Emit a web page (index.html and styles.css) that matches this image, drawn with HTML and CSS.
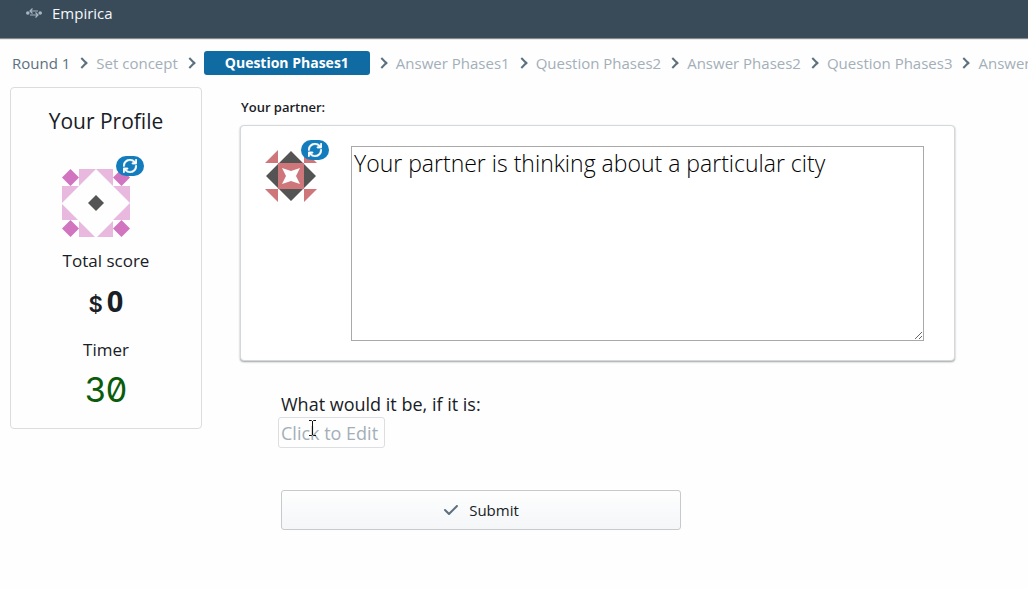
FILE: index.html
```html
<!DOCTYPE html>
<html lang="en">
<head>
<meta charset="utf-8">
<meta name="viewport" content="width=device-width, initial-scale=1">
<title>Empirica</title>
<link rel="stylesheet" href="styles.css">
</head>
<body>
<svg class="sprite" aria-hidden="true">
  <symbol id="refresh" viewBox="0 0 16 16"><path d="M14.99 6.99c-.55 0-1 .45-1 1 0 3.31-2.69 6-6 6-1.77 0-3.36-.78-4.46-2h1.46c.55 0 1-.45 1-1s-.45-1-1-1h-4c-.55 0-1 .45-1 1v4c0 .55.45 1 1 1s1-.45 1-1v-1.74a7.95 7.95 0 006 2.74c4.42 0 8-3.58 8-8 0-.55-.45-1-1-1zm0-7c-.55 0-1 .45-1 1v1.74a7.95 7.95 0 00-6-2.74c-4.42 0-8 3.58-8 8 0 .55.45 1 1 1s1-.45 1-1c0-3.31 2.69-6 6-6 1.77 0 3.36.78 4.46 2h-1.46c-.55 0-1 .45-1 1s.45 1 1 1h4c.55 0 1-.45 1-1v-4c0-.55-.45-1-1-1z"/></symbol>
</svg>
<header class="navbar">
  <svg class="brand-icon" viewBox="0 0 16 16" width="16" height="16" aria-hidden="true">
    <circle cx="1.8" cy="8" r="1.8" fill="currentColor"/><circle cx="14.2" cy="8" r="1.8" fill="currentColor"/>
    <path d="M12 6H4.500M6.500 3.500 4 6l2.500 2.500M4 10h7.500M9.500 7.500 12 10l-2.500 2.500" fill="none" stroke="currentColor" stroke-width="1.200"/>
  </svg>
  <span>Empirica</span>
</header>
<nav aria-label="Progress">
  <ol class="crumbs">
    <li class="crumb crumb-round">Round 1</li>
    <li class="crumb">Set concept</li>
    <li class="crumb crumb-current" aria-current="step"><span class="pill">Question Phases1</span></li>
    <li class="crumb">Answer Phases1</li>
    <li class="crumb">Question Phases2</li>
    <li class="crumb">Answer Phases2</li>
    <li class="crumb">Question Phases3</li>
    <li class="crumb">Answer Phases3</li>
  </ol>
</nav>
<div class="round">
  <aside class="profile">
    <h1 class="profile-title">Your Profile</h1>
    <div class="avatar avatar-self">
      <svg viewBox="0 0 68 68" width="68" height="68" aria-hidden="true">
        <path fill="#e8b8df" d="M17 0h17L17 17zM34 0h17v17zM0 17h17L0 34zM68 17v17L51 17zM0 35v16h16zM68 34v17H51zM17 52v16h16zM51 52v16H35z"/>
        <path fill="#d175c1" d="M8.500 0l8.500 8.500-8.500 8.500L0 8.500zM59.500 0l8.500 8.500-8.500 8.500-8.500-8.500zM8.500 51l8.500 8.500L8.500 68 0 59.500zM59.500 51l8.500 8.500-8.500 8.500-8.500-8.500z"/>
        <path fill="#545454" d="M34 26l8 8-8 8-8-8z"/>
      </svg>
      <span class="badge"><svg class="badge-icon"><use href="#refresh"/></svg></span>
    </div>
    <h2 class="profile-label">Total score</h2>
    <p class="score"><span class="currency">$</span><span>0</span></p>
    <h2 class="profile-label">Timer</h2>
    <p class="timer">30</p>
  </aside>
  <main class="stage">
    <label class="partner-label" for="prompt">Your partner:</label>
    <section class="partner-card">
      <div class="avatar avatar-partner">
        <svg viewBox="0 0 52 52" width="52" height="52" aria-hidden="true">
          <path fill="#cf767a" d="M13 0v13H0zM39 0v13h13zM0 39h13v13zM39 39h13L39 52zM13 13h26v26H13z"/>
          <path fill="#545454" d="M26 1l12 12H14zM51 26L39 38V14zM26 51L14 39h24zM1 26l12-12v24z"/>
          <path fill="#fff" d="M17 18l9 3 9-3-4 8 4 8-9-3-9 3 4-8z"/>
        </svg>
        <span class="badge badge-partner"><svg class="badge-icon"><use href="#refresh"/></svg></span>
      </div>
      <textarea class="prompt" id="prompt" readonly>Your partner is thinking about a particular city</textarea>
    </section>
    <form class="question">
      <label class="question-label" for="answer">What would it be, if it is:</label>
      <div class="editable">
        <input class="editable-input" id="answer" type="text" placeholder="Click to Edit">
        <svg class="caret" viewBox="0 0 9 18" width="9" height="18" aria-hidden="true"><path d="M1 1.500h2.500l1 1 1-1H8M4.500 2v14M1 16.500h2.500l1-1 1 1H8" fill="none" stroke="#111"/></svg>
      </div>
      <button class="submit" type="button">
        <svg viewBox="0 0 16 16" width="16" height="16" fill="#5c7080" aria-hidden="true"><path d="M14 3c-.28 0-.53.11-.71.29L6 10.590l-3.290-3.300a1.003 1.003 0 00-1.420 1.420l4 4c.18.18.43.29.71.29s.53-.11.71-.29l8-8A1.003 1.003 0 0014 3z"/></svg>
        Submit
      </button>
    </form>
  </main>
</div>
</body>
</html>
```

FILE: styles.css
```css
* { box-sizing: border-box; }

body {
  margin: 0;
  background: #fefefe;
  color: #182026;
  font: 15px/20px "Open Sans", "Noto Sans", sans-serif;
  overflow-x: hidden;
}

h1, h2, p, ol { margin: 0; padding: 0; font-weight: 400; }

.sprite { display: none; }

.navbar {
  display: flex;
  align-items: center;
  gap: 10px;
  height: 38px;
  padding: 0 26px 12px;
  background: #394b59;
  color: #f5f8fa;
  box-shadow: 0 1px 1px rgba(16, 22, 26, .5);
}

.brand-icon { color: #a7b6c2; }

.crumbs {
  display: flex;
  align-items: center;
  padding: 13px 0 0 12px;
  list-style: none;
  overflow: hidden;
}

.crumb {
  display: flex;
  flex: none;
  align-items: center;
  color: #a3afb8;
  white-space: nowrap;
}

.crumb + .crumb::before {
  content: "";
  width: 6px;
  height: 6px;
  margin: 0 10px 0 8px;
  border: solid #5c7080;
  border-width: 2px 2px 0 0;
  transform: rotate(45deg);
}

.crumb-round { color: #5c7080; }

.pill {
  padding: 2px 21px;
  border-radius: 3px;
  background: #106ba3;
  color: #fff;
  font-size: 14px;
  font-weight: 700;
}

.round {
  display: flex;
  align-items: flex-start;
  gap: 38px;
  padding: 12px 73px 0 10px;
}

.profile {
  display: flex;
  flex: 0 0 192px;
  flex-direction: column;
  align-items: center;
  padding: 19px 20px 20px;
  border: 1px solid #dbdcdd;
  border-radius: 4px;
}

.profile-title { font-size: 21px; line-height: 28px; font-weight: 500; }

.avatar { position: relative; }
.avatar svg { display: block; }
.avatar-self { margin: 34px 20px 14px 0; }

.badge {
  position: absolute;
  top: -13px;
  right: -14px;
  display: grid;
  place-items: center;
  width: 28px;
  height: 20px;
  border-radius: 10px;
  background: #137cbd;
}

.badge-partner { top: -10px; right: -12px; }
.badge-icon { width: 14px; height: 14px; fill: #fff; stroke: #fff; stroke-width: .4px; }

.profile-label { font-size: 17px; line-height: 20px; font-weight: 500; }

.score {
  display: flex;
  align-items: center;
  gap: 4px;
  padding: 11px 0 20px;
  font: 700 29px/36px "Open Sans", sans-serif;
}

.currency { padding-top: 6px; font: 600 22px/32px Inter, sans-serif; }

.timer {
  padding-top: 12px;
  color: #0a5c0a;
  font: 400 34px/36px Inter, sans-serif;
  font-feature-settings: "zero";
}

.stage { flex: 1; min-width: 0; padding-top: 10px; }

.partner-label {
  display: block;
  padding: 0 0 8px 1px;
  font-size: 13px;
  font-weight: 600;
}

.partner-card {
  display: flex;
  align-items: flex-start;
  gap: 34px;
  padding: 20px 30px 19px;
  border: 1px solid #d3d8dc;
  border-radius: 4px;
  background: #fff;
  box-shadow: 0 1px 2px rgba(16, 22, 26, .4);
}

.avatar-partner { margin: 4px 0 0 -6px; }

.prompt {
  display: block;
  flex: 1;
  height: 195px;
  padding: 1px 2px;
  border: 1px solid #a9a9a9;
  background: #fff;
  color: #000;
  font: 350 23px/30px "Open Sans", "Noto Sans", sans-serif;
}

.question {
  display: flex;
  flex-direction: column;
  align-items: flex-start;
  padding: 30px 0 0 41px;
}

.question-label { font-size: 18px; line-height: 26px; }

.editable { position: relative; margin-left: -3px; }

.editable-input {
  display: block;
  width: 107px;
  height: 31px;
  padding: 0 2px;
  border: 1px solid #dbdfe2;
  border-radius: 3px;
  background: transparent;
  font: 18px/28px "Open Sans", "Noto Sans", sans-serif;
}

.editable-input::placeholder { color: #a3afb8; opacity: 1; }
.caret { position: absolute; left: 30px; top: 2px; }

.submit {
  display: flex;
  align-items: center;
  justify-content: center;
  gap: 10px;
  width: 400px;
  max-width: 100%;
  height: 40px;
  margin-top: 42px;
  border: 1px solid #c6cacd;
  border-radius: 3px;
  background: linear-gradient(#fefefe, #f4f6f8);
  color: #182026;
  font: inherit;
}
```
